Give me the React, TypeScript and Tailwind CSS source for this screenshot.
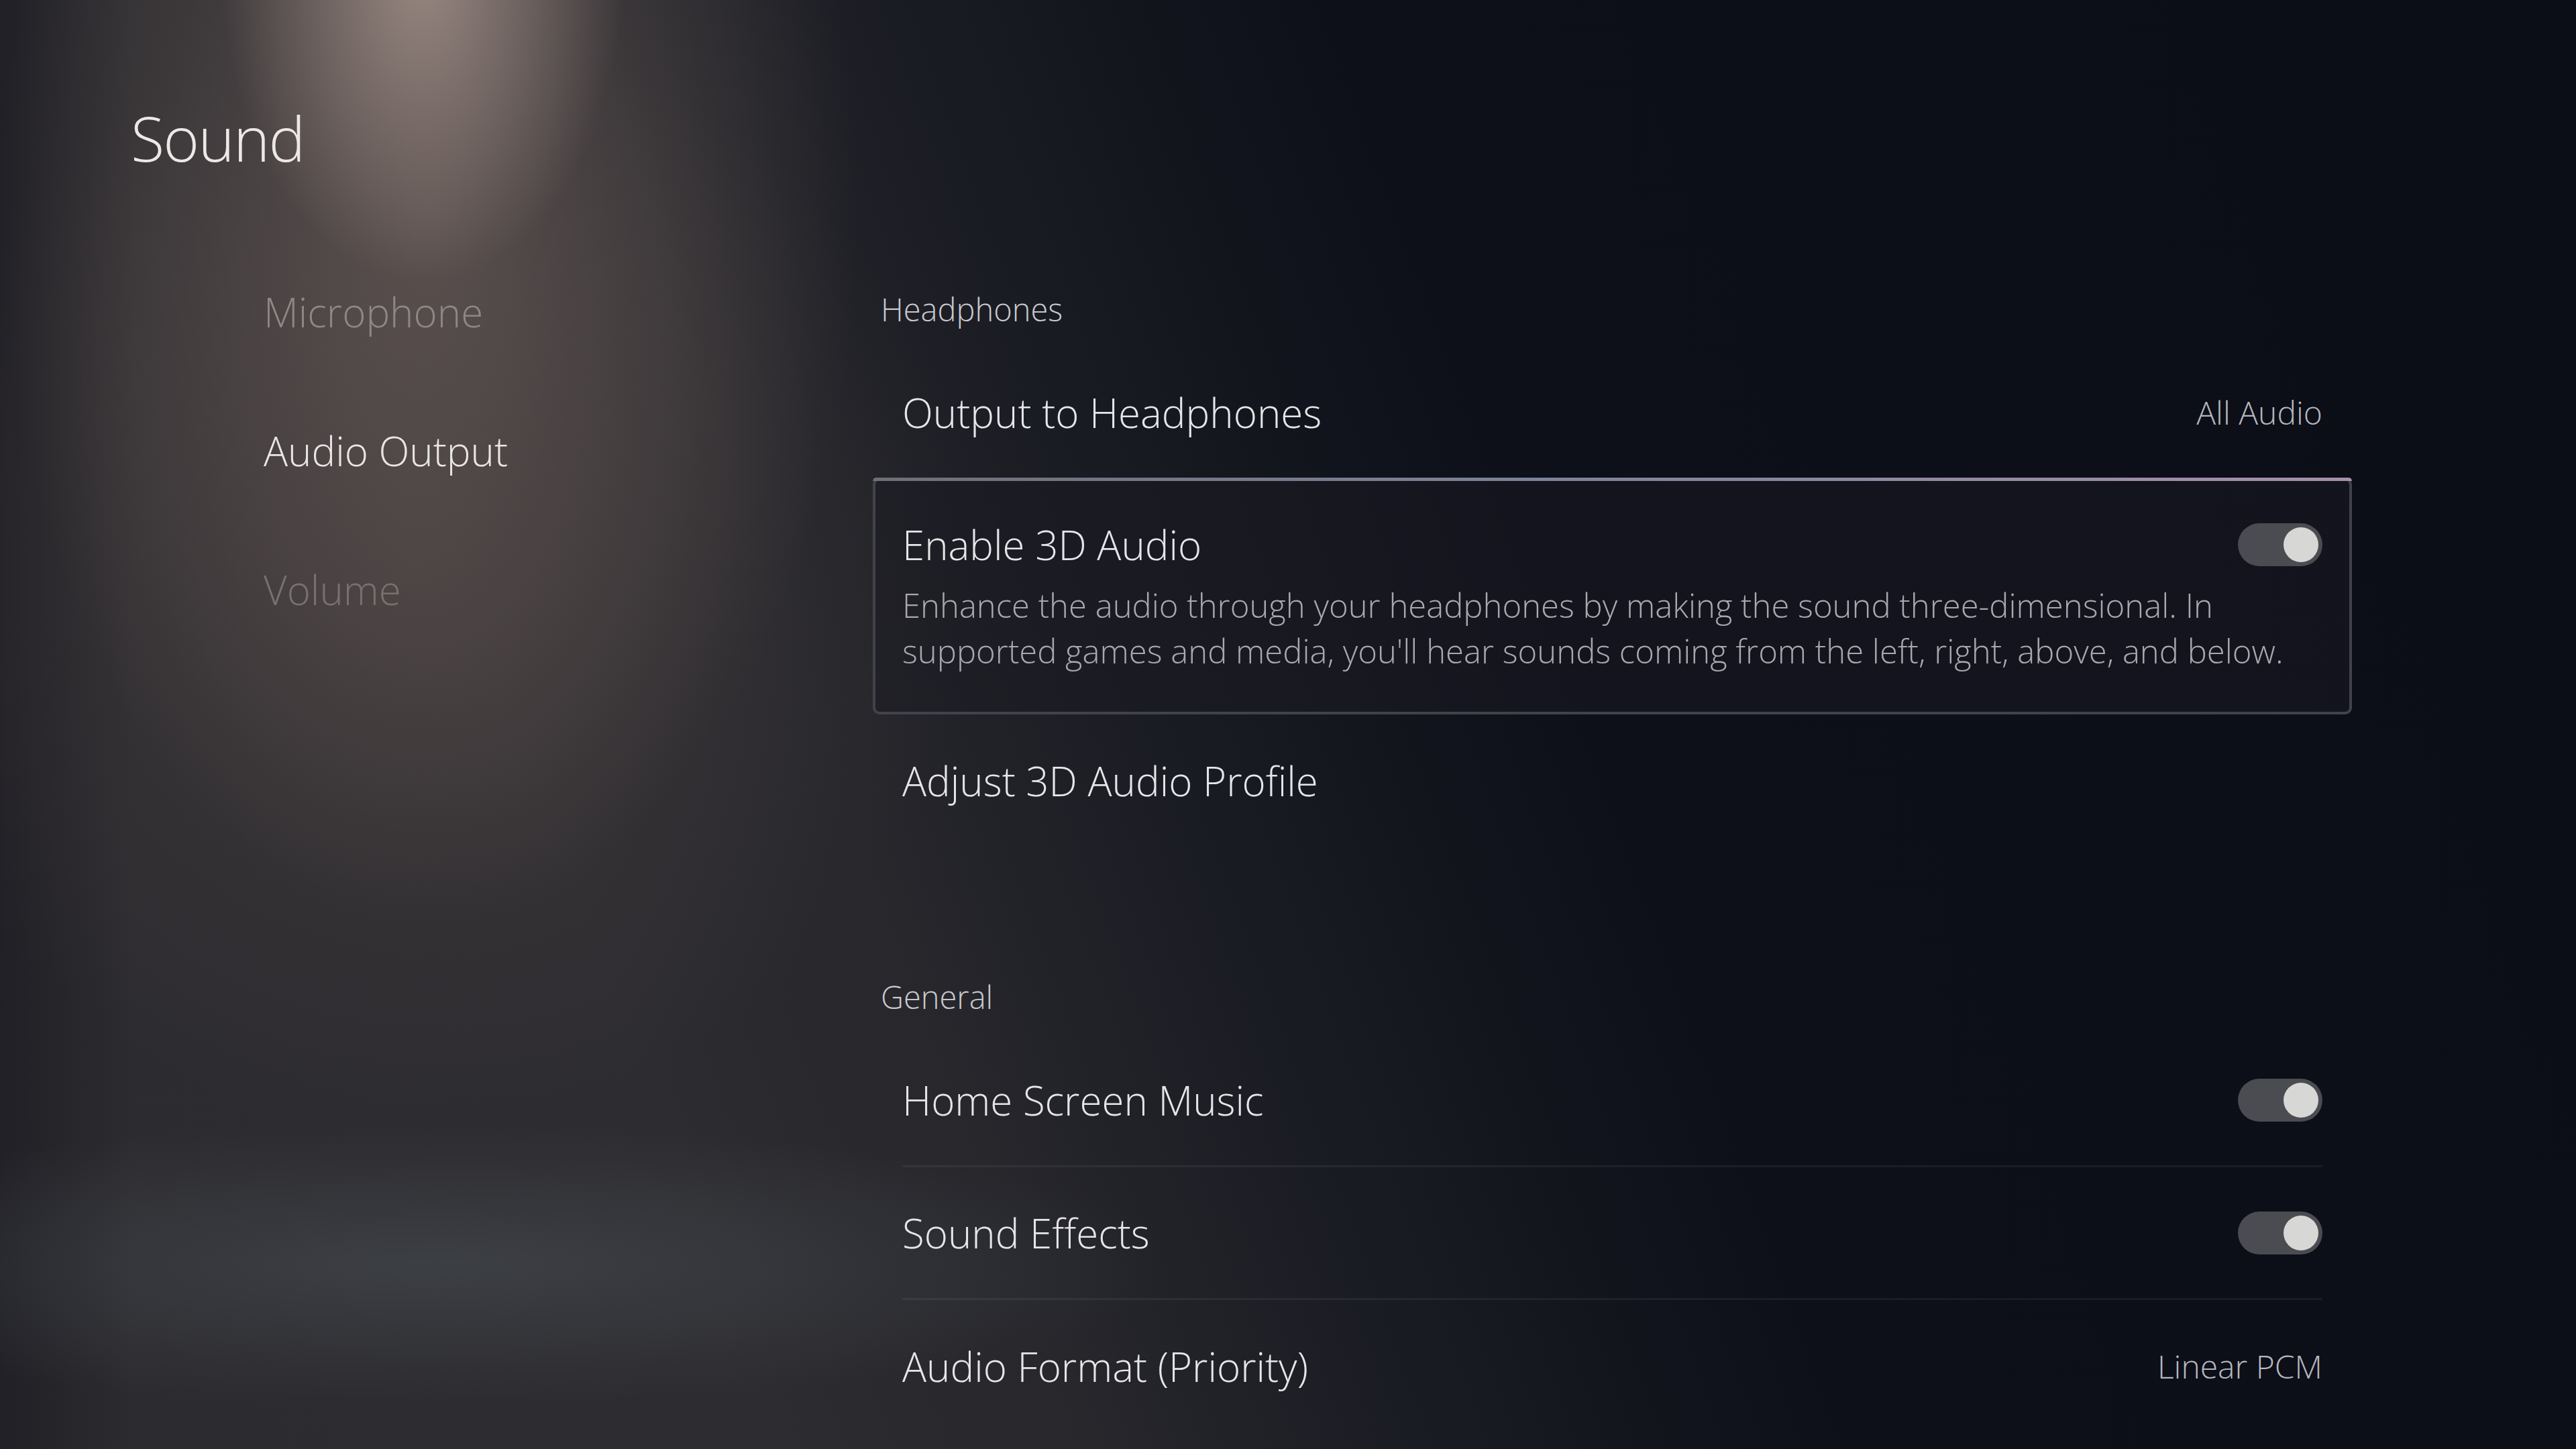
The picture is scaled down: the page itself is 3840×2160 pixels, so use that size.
import React from 'react';

type RowProps = {
  label: string;
  value?: string;
  toggle?: boolean;
  divider?: boolean;
};

const Toggle: React.FC = () => (
  <div className="flex h-[64px] w-[126px] items-center justify-end rounded-full bg-[#4b4c52] pr-[6px]">
    <div className="h-[52px] w-[52px] rounded-full bg-[#d7d7d5]" />
  </div>
);

const Row: React.FC<RowProps> = ({ label, value, toggle, divider }) => (
  <div
    className={`flex h-[198px] items-center justify-between ${
      divider ? 'border-b-[3px] border-[#ffffff0f]' : ''
    }`}
  >
    <span className="text-[60px] leading-none text-[#e6e6e8]">{label}</span>
    {value && <span className="text-[48px] leading-none text-[#b6b7bd]">{value}</span>}
    {toggle && <Toggle />}
  </div>
);

const SectionHeader: React.FC<{ title: string; className?: string }> = ({ title, className = '' }) => (
  <div className={`flex h-[112px] items-center pl-[12px] text-[47px] leading-none text-[#c8c9ce] ${className}`}>
    {title}
  </div>
);

export default function App() {
  return (
    <div
      className="flex h-[2160px] w-[3840px] overflow-hidden bg-[#0c0e18] bg-[radial-gradient(ellipse_300px_460px_at_630px_-40px,rgba(190,168,158,0.68),rgba(190,168,158,0)_100%),radial-gradient(ellipse_640px_1050px_at_640px_320px,rgba(122,106,100,0.55),rgba(122,106,100,0)_100%),radial-gradient(ellipse_820px_820px_at_620px_860px,rgba(88,76,74,0.4),rgba(88,76,74,0)_100%),radial-gradient(ellipse_1100px_210px_at_650px_1885px,rgba(82,90,96,0.42),rgba(82,90,96,0)_100%),linear-gradient(90deg,rgba(16,16,24,0.4)_0px,rgba(16,16,24,0)_200px),linear-gradient(70deg,#2c2b2f_0%,#2d2c30_25%,#27272c_35%,#191b22_47%,#0d0f19_60%,#0b0d17_100%)] font-['Open_Sans',sans-serif] font-light"
    >
      {/* Left: page title + category list */}
      <aside className="w-[1301px] shrink-0 pl-[195px] pt-[160px]">
        <h1 className="text-[92px] font-light leading-none tracking-[-0.02em] text-[#ebe8e6]">Sound</h1>
        <nav className="mt-[183px] flex flex-col gap-[147px] pl-[198px] text-[60px] leading-none">
          <span className="text-[#8e8786]">Microphone</span>
          <span className="text-[#e8e6e6]">Audio Output</span>
          <span className="text-[#77716f]">Volume</span>
        </nav>
      </aside>

      {/* Right: settings list */}
      <main className="w-[2205px] shrink-0 pt-[405px]">
        <SectionHeader title="Headphones" />
        <div className="px-[44px]">
          <div className="flex h-[195px] items-center justify-between">
            <span className="text-[60px] leading-none text-[#e6e6e8]">Output to Headphones</span>
            <span className="text-[48px] leading-none text-[#b6b7bd]">All Audio</span>
          </div>
        </div>

        {/* focused item */}
        <div className="relative rounded-[10px] border-[4px] border-[#41434c] bg-[#1a1a22]/50 px-[40px] pt-[64px] pb-[57px]">
          <div className="absolute -top-[4px] -left-[4px] -right-[4px] h-[5px] rounded-t-[10px] bg-[linear-gradient(90deg,#6e7077,#7c8298_45%,#a690aa)]" />
          <div className="flex h-[64px] items-center justify-between">
            <span className="text-[60px] leading-none text-[#e6e6e8]">Enable 3D Audio</span>
            <Toggle />
          </div>
          <p className="mt-[24px] text-[49px] leading-[68px] text-[#a8a9af]">
            Enhance the audio through your headphones by making the sound three-dimensional. In
            <br />
            supported games and media, you'll hear sounds coming from the left, right, above, and below.
          </p>
        </div>

        <div className="px-[44px]">
          <Row label="Adjust 3D Audio Profile" />
        </div>

        <SectionHeader title="General" className="mt-[167px]" />
        <div className="px-[44px]">
          <Row label="Home Screen Music" toggle divider />
          <Row label="Sound Effects" toggle divider />
          <Row label="Audio Format (Priority)" value="Linear PCM" />
        </div>
      </main>
    </div>
  );
}
